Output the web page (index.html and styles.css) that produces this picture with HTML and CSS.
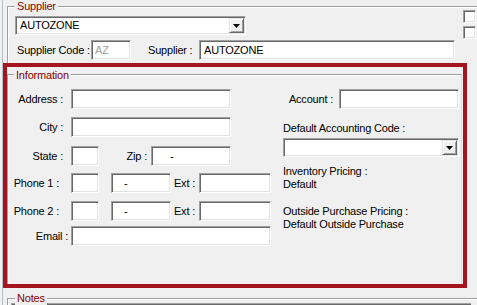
FILE: index.html
```html
<!DOCTYPE html>
<html lang="en">
    <head>
        <meta charset="UTF-8">
        <meta name="viewport" content="width=device-width, initial-scale=1.0">
        <title>Supplier</title>
        <link rel="stylesheet" href="styles.css">
    </head>
    <body>
        <div class="page">
            <div class="group supplier">
                <span class="legend">Supplier</span>
                <div class="supplier-body">
                    <div class="supplier-main">
                        <div class="combo combo-supplier">
                            <span class="combo-text">AUTOZONE</span>
                            <span class="combo-btn"><svg width="7" height="4" viewBox="0 0 7 4"><polygon points="0,0 7,0 3.5,4" fill="#000"/></svg></span>
                        </div>
                        <div class="row code-row">
                            <label class="lbl lbl-code" for="supplier-code">Supplier Code :</label>
                            <input class="field field-code" id="supplier-code" type="text" value="AZ" readonly>
                            <label class="lbl lbl-supplier" for="supplier-name">Supplier :</label>
                            <input class="field field-supplier" id="supplier-name" type="text" value="AUTOZONE">
                        </div>
                    </div>
                    <div class="checks">
                        <span class="check"></span>
                        <span class="check"></span>
                    </div>
                </div>
            </div>

            <div class="info-frame">
                <div class="group info">
                    <span class="legend legend-info">Information</span>
                    <div class="info-body">
                        <div class="info-left">
                            <div class="row">
                                <label class="lbl cell" for="address">Address :</label>
                                <input class="field w160" id="address" type="text">
                            </div>
                            <div class="row r-city">
                                <label class="lbl cell" for="city">City :</label>
                                <input class="field w160" id="city" type="text">
                            </div>
                            <div class="row r-state">
                                <label class="lbl cell" for="state">State :</label>
                                <input class="field w28" id="state" type="text">
                                <label class="lbl cell-zip" for="zip">Zip :</label>
                                <input class="field field-zip" id="zip" type="text" value="-">
                            </div>
                            <div class="row r-phone1">
                                <label class="lbl cell cell-phone" for="phone1">Phone 1 :</label>
                                <input class="field w28" id="phone1" type="text">
                                <input class="field field-num" type="text" value="-">
                                <label class="lbl cell-ext" for="ext1">Ext :</label>
                                <input class="field w72" id="ext1" type="text">
                            </div>
                            <div class="row r-phone2">
                                <label class="lbl cell cell-phone" for="phone2">Phone 2 :</label>
                                <input class="field w28" id="phone2" type="text">
                                <input class="field field-num" type="text" value="-">
                                <label class="lbl cell-ext" for="ext2">Ext :</label>
                                <input class="field w72" id="ext2" type="text">
                            </div>
                            <div class="row r-email">
                                <label class="lbl cell cell-email" for="email">Email :</label>
                                <input class="field w200" id="email" type="text">
                            </div>
                        </div>
                        <div class="info-right">
                            <div class="row">
                                <label class="lbl cell-acct" for="account">Account :</label>
                                <input class="field w120" id="account" type="text">
                            </div>
                            <div class="text-line acct-code">Default Accounting Code :</div>
                            <div class="combo combo-acct">
                                <span class="combo-text"></span>
                                <span class="combo-btn"><svg width="7" height="4" viewBox="0 0 7 4"><polygon points="0,0 7,0 3.5,4" fill="#000"/></svg></span>
                            </div>
                            <div class="text-line price">Inventory Pricing :</div>
                            <div class="text-line">Default</div>
                            <div class="text-line price2">Outside Purchase Pricing :</div>
                            <div class="text-line">Default Outside Purchase</div>
                        </div>
                    </div>
                </div>
            </div>

            <div class="group notes">
                <span class="legend">Notes</span>
                <div class="notes-box"></div>
            </div>
        </div>
    </body>
</html>
```

FILE: styles.css
```css
body {
    margin: 0;
    background-color: #f0f0f0;
    font-family: "Liberation Sans", Arial, sans-serif;
    font-size: 11px;
    line-height: 13px;
    letter-spacing: -0.2px;
    color: #000;
    overflow: hidden;
}
.page {
    margin-left: 2px;
    border-left: 1px solid #b3bfcc;
    height: 305px;
    box-sizing: border-box;
    overflow: hidden;
}

/* group boxes */
.group {
    position: relative;
    border-top: 1px solid #a0a0a0;
    border-left: 1px solid #a0a0a0;
    box-shadow: inset 1px 1px 0 #fff;
}
.legend {
    position: absolute;
    left: 7px;
    top: -7px;
    padding: 0 2px;
    background-color: #f0f0f0;
    color: #8a0000;
}
.legend-info {
    left: 6px;
    top: -6px;
}

/* sunken controls */
.field, .combo, .check {
    box-sizing: border-box;
    background-color: #fff;
    border: 1px solid;
    border-color: #a0a0a0 #fff #fff #a0a0a0;
    box-shadow: inset 1px 1px 0 #696969, inset -1px -1px 0 #e3e3e3;
}
.field {
    height: 20px;
    margin: 0;
    padding: 0 0 0 4px;
    font: inherit;
    letter-spacing: inherit;
    color: #000;
    outline: none;
}
.combo {
    display: flex;
    height: 19px;
    padding: 1px;
}
.combo-text {
    flex: 1;
    padding-left: 3px;
    line-height: 15px;
}
.combo-btn {
    width: 15px;
    box-sizing: border-box;
    display: flex;
    align-items: center;
    justify-content: center;
    background-color: #f0f0f0;
    border: 1px solid;
    border-color: #e3e3e3 #696969 #696969 #e3e3e3;
    box-shadow: inset 1px 1px 0 #fff, inset -1px -1px 0 #a0a0a0;
}
.check {
    display: block;
    width: 13px;
    height: 13px;
}

.row {
    display: flex;
    align-items: center;
}
.lbl {
    white-space: nowrap;
    box-sizing: border-box;
}

/* supplier */
.supplier {
    margin: 6px 0 0 4px;
    height: 57px;
    box-sizing: border-box;
}
.supplier-body {
    display: flex;
    align-items: flex-start;
    padding-left: 7px;
}
.supplier-main {
    width: 440px;
    padding-top: 9px;
}
.combo-supplier {
    width: 231px;
}
.checks {
    display: flex;
    flex-direction: column;
    gap: 3px;
    margin-left: 8px;
    padding-top: 3px;
}
.code-row {
    margin-top: 5px;
}
.lbl-code {
    width: 76px;
    padding-left: 2px;
}
.field-code {
    width: 40px;
    padding-left: 3px;
    color: #a0a0a0;
}
.lbl-supplier {
    width: 68px;
    padding-left: 17px;
}
.field-supplier {
    width: 256px;
}

/* information */
.info-frame {
    width: 464px;
    height: 225px;
    box-sizing: border-box;
    border: 4px solid #a5151f;
}
.info {
    margin-top: 7px;
    margin-right: 1px;
    height: 210px;
    box-sizing: border-box;
    border-right: 1px solid #dcdcdc;
}
.info-body {
    display: flex;
    padding-top: 14px;
}
.info-left {
    width: 264px;
}
.info-right {
    margin-left: 11px;
    width: 176px;
}
.cell {
    width: 63px;
    padding-right: 8px;
    text-align: right;
}
.cell-phone {
    padding-right: 12px;
}
.cell-email {
    padding-right: 3px;
}
.cell-zip {
    width: 52px;
    padding-right: 4px;
    text-align: right;
}
.cell-ext {
    width: 28px;
    padding-right: 4px;
    text-align: right;
}
.cell-acct {
    width: 56px;
    padding-right: 6px;
    text-align: right;
}
.w28 { width: 28px; }
.w72 { width: 72px; }
.w120 { width: 120px; }
.w160 { width: 160px; }
.w200 { width: 200px; }
.field-zip {
    width: 80px;
    padding-left: 18px;
}
.field-num {
    width: 60px;
    margin-left: 12px;
    padding-left: 12px;
}
.r-city { margin-top: 8px; }
.r-state { margin-top: 9px; }
.r-phone1 { margin-top: 7px; }
.r-phone2 { margin-top: 8px; }
.r-email { margin-top: 5px; }

.text-line {
    white-space: nowrap;
}
.acct-code {
    margin-top: 13px;
}
.combo-acct {
    width: 176px;
    margin-top: 3px;
}
.price {
    margin-top: 8px;
}
.price2 {
    margin-top: 14px;
}

/* notes */
.notes {
    margin: 10px 0 0 4px;
    height: 7px;
    box-sizing: border-box;
}
.notes-box {
    margin: 4px 0 0 3px;
    width: 460px;
    height: 2px;
    box-sizing: border-box;
    border-top: 1px solid #a0a0a0;
    border-left: 1px solid #a0a0a0;
    box-shadow: inset 1px 1px 0 #696969;
    background-color: #fff;
}
```
